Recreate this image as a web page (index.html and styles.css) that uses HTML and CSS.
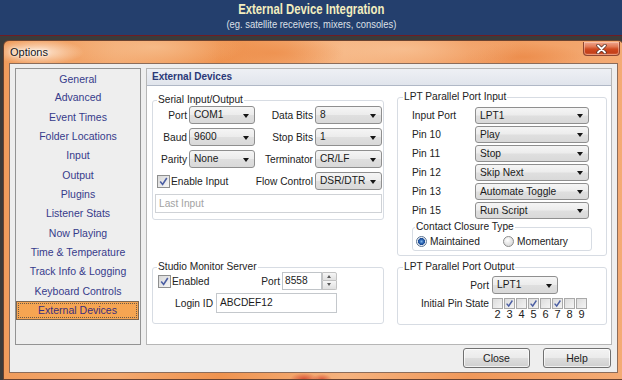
FILE: index.html
```html
<!DOCTYPE html>
<html lang="en">
<head>
<meta charset="utf-8">
<title>External Device Integration</title>
<link rel="stylesheet" href="styles.css">
</head>
<body>
<header class="banner">
  <h1 class="banner-title"><span class="narrow-title">External Device Integration</span></h1>
  <p class="banner-sub"><span class="narrow-sub">(eg. satellite receivers, mixers, consoles)</span></p>
</header>
<div class="desk">
  <div class="window">
    <div class="titlebar">
      <span class="title">Options</span>
      <span class="close-btn">
        <svg width="13" height="10" viewBox="0 0 13 10"><path d="M3 1.5 L10 8.5 M10 1.5 L3 8.5" stroke="#5a3328" stroke-width="3.4" stroke-linecap="round" fill="none"/><path d="M3 1.5 L10 8.5 M10 1.5 L3 8.5" stroke="#ffffff" stroke-width="1.8" stroke-linecap="round" fill="none"/></svg>
      </span>
    </div>
    <div class="client">
      <div class="main">
        <ul class="nav">
          <li>General</li>
          <li>Advanced</li>
          <li>Event Times</li>
          <li>Folder Locations</li>
          <li>Input</li>
          <li>Output</li>
          <li>Plugins</li>
          <li>Listener Stats</li>
          <li>Now Playing</li>
          <li>Time &amp; Temperature</li>
          <li>Track Info &amp; Logging</li>
          <li>Keyboard Controls</li>
          <li class="selected"><span class="focus">External Devices</span></li>
        </ul>
        <section class="panel">
          <div class="panel-head">External Devices</div>
          <div class="panel-body">
            <fieldset class="group serial">
              <legend>Serial Input/Output</legend>
              <div class="serial-grid">
                <span class="lbl r">Port</span><div class="combo">COM1</div>
                <span class="lbl r">Data Bits</span><div class="combo">8</div>
                <span class="lbl r">Baud</span><div class="combo">9600</div>
                <span class="lbl r">Stop Bits</span><div class="combo">1</div>
                <span class="lbl r">Parity</span><div class="combo">None</div>
                <span class="lbl r">Terminator</span><div class="combo">CR/LF</div>
                <label class="check span2"><span class="cb"><svg width="11" height="11" viewBox="0 0 11 11"><path d="M2.2 5.6 L4.6 8.4 L8.8 2" stroke="#4b5ea3" stroke-width="1.6" fill="none"/></svg></span>Enable Input</label>
                <span class="lbl r">Flow Control</span><div class="combo">DSR/DTR</div>
                <div class="field placeholder span4">Last Input</div>
              </div>
            </fieldset>

            <fieldset class="group lpt-in">
              <legend>LPT Parallel Port Input</legend>
              <div class="lpt-body">
                <div class="lpt-grid">
                  <span class="lbl">Input Port</span><div class="combo sm">LPT1</div>
                  <span class="lbl">Pin 10</span><div class="combo sm">Play</div>
                  <span class="lbl">Pin 11</span><div class="combo sm">Stop</div>
                  <span class="lbl">Pin 12</span><div class="combo sm">Skip Next</div>
                  <span class="lbl">Pin 13</span><div class="combo sm">Automate Toggle</div>
                  <span class="lbl">Pin 15</span><div class="combo sm">Run Script</div>
                </div>
                <fieldset class="group contact">
                  <legend>Contact Closure Type</legend>
                  <div class="radios">
                    <label class="radio"><span class="rb on"></span>Maintained</label>
                    <label class="radio"><span class="rb"></span>Momentary</label>
                  </div>
                </fieldset>
              </div>
            </fieldset>

            <fieldset class="group studio">
              <legend>Studio Monitor Server</legend>
              <div class="studio-grid">
                <label class="check"><span class="cb"><svg width="11" height="11" viewBox="0 0 11 11"><path d="M2.2 5.6 L4.6 8.4 L8.8 2" stroke="#4b5ea3" stroke-width="1.6" fill="none"/></svg></span>Enabled</label>
                <span class="lbl r">Port</span>
                <div class="spinner">
                  <div class="field spin-field">8558</div>
                  <div class="spin-btns">
                    <span class="spin-up"></span>
                    <span class="spin-down"></span>
                  </div>
                </div>
                <span class="lbl r login">Login ID</span>
                <div class="field span2b">ABCDEF12</div>
              </div>
            </fieldset>

            <fieldset class="group lpt-out">
              <legend>LPT Parallel Port Output</legend>
              <div class="out-grid">
                <span class="lbl r">Port</span><div class="combo out-combo">LPT1</div>
                <span class="lbl r pin-lbl">Initial Pin State</span>
                <div class="pins">
                  <div class="pin"><span class="pb"></span><span class="num">2</span></div>
                  <div class="pin"><span class="pb"><svg width="9" height="9" viewBox="0 0 9 9"><path d="M1.6 4.6 L3.7 7 L7.4 1.5" stroke="#4b5ea3" stroke-width="1.4" fill="none"/></svg></span><span class="num">3</span></div>
                  <div class="pin"><span class="pb"></span><span class="num">4</span></div>
                  <div class="pin"><span class="pb"><svg width="9" height="9" viewBox="0 0 9 9"><path d="M1.6 4.6 L3.7 7 L7.4 1.5" stroke="#4b5ea3" stroke-width="1.4" fill="none"/></svg></span><span class="num">5</span></div>
                  <div class="pin"><span class="pb"></span><span class="num">6</span></div>
                  <div class="pin"><span class="pb"><svg width="9" height="9" viewBox="0 0 9 9"><path d="M1.6 4.6 L3.7 7 L7.4 1.5" stroke="#4b5ea3" stroke-width="1.4" fill="none"/></svg></span><span class="num">7</span></div>
                  <div class="pin"><span class="pb"></span><span class="num">8</span></div>
                  <div class="pin"><span class="pb"></span><span class="num">9</span></div>
                </div>
              </div>
            </fieldset>
          </div>
        </section>
      </div>
      <div class="actions">
        <button class="btn btn-close" type="button">Close</button>
        <button class="btn btn-help" type="button">Help</button>
      </div>
    </div>
  </div>
</div>
</body>
</html>
```

FILE: styles.css
```css
* { box-sizing: border-box; }
html, body { margin: 0; padding: 0; }
body {
  width: 622px;
  height: 380px;
  overflow: hidden;
  background: #3b3b3b;
  font-family: "Liberation Sans", Arial, sans-serif;
  color: #222;
}

/* Banner */
.banner {
  height: 36px;
  background: #243f6d;
  border-bottom: 1px solid #6e1c24;
  padding-top: 1px;
  text-align: center;
}
.banner-title {
  margin: 0;
  font-family: "Liberation Sans", Arial, sans-serif;
  font-weight: bold;
  font-size: 14px;
  line-height: 16px;
  color: #f3eebf;
}
.narrow-title {
  display: inline-block;
  transform: scaleX(0.81);
  white-space: nowrap;
}
.banner-sub {
  margin: 1px 0 0;
  font-family: "Liberation Sans", Arial, sans-serif;
  font-size: 11px;
  line-height: 13px;
  color: #dde0e8;
}
.narrow-sub {
  display: inline-block;
  transform: scaleX(0.855);
  white-space: nowrap;
}

/* Desktop + window */
.desk {
  padding: 4px 0 0 3px;
}
.window {
  width: 621px;
  height: 340px;
  border: 1px solid #6b4330;
  border-radius: 6px 6px 0 0;
  padding: 0 5px 6px;
  display: flex;
  flex-direction: column;
  background:
    radial-gradient(ellipse 46px 13px at 34px 11px, rgba(255,238,222,0.95), rgba(255,238,222,0) 100%),
    radial-gradient(ellipse 90px 22px at 150px 6px, rgba(247,196,150,0.7), rgba(247,196,150,0)),
    radial-gradient(ellipse 70px 16px at 270px 12px, rgba(236,138,70,0.6), rgba(236,138,70,0)),
    radial-gradient(ellipse 120px 24px at 400px 8px, rgba(250,205,165,0.6), rgba(250,205,165,0)),
    radial-gradient(ellipse 60px 14px at 520px 16px, rgba(232,128,60,0.55), rgba(232,128,60,0)),
    radial-gradient(ellipse 14px 6px at 300px 338px, rgba(210,60,40,0.8), rgba(210,60,40,0)),
    radial-gradient(ellipse 10px 5px at 318px 338px, rgba(210,60,40,0.7), rgba(210,60,40,0)),
    linear-gradient(90deg, #f09c5c 0%, #f3a86e 18%, #ef934f 35%, #f5b27e 55%, #f0985a 75%, #f4ab74 100%);
}
.titlebar {
  height: 22px;
  display: flex;
  align-items: center;
}
.title {
  font-size: 11px;
  color: #151515;
  padding-left: 1px;
  text-shadow: 0 0 5px #fff, 0 0 2px #fff;
}
.close-btn {
  margin-left: auto;
  align-self: flex-start;
  margin-top: 1px;
  margin-right: -2px;
  width: 37px;
  height: 14px;
  border: 1px solid #8d4632;
  border-top: none;
  border-radius: 0 0 4px 4px;
  background: linear-gradient(#f0a890 0%, #e27a56 35%, #cf4a20 55%, #c4401a 80%, #d8663e 100%);
  display: flex;
  align-items: center;
  justify-content: center;
  box-shadow: inset 0 0 0 1px rgba(255,220,200,0.45);
}
.close-btn svg { display: block; }

.client {
  flex: 1;
  border: 1px solid #8b6c5a;
  background: #eeeeee;
  padding: 4px 5px 4px 5px;
  display: flex;
  flex-direction: column;
}
.main {
  height: 277px;
  display: flex;
  gap: 5px;
}

/* Left nav list */
.nav {
  list-style: none;
  margin: 0;
  padding: 0;
  width: 126px;
  flex: none;
  height: 277px;
  border: 1px solid #939393;
  background: #eeeeee;
  font-size: 10.5px;
  color: #363b8b;
}
.nav li {
  height: 19.33px;
  line-height: 19.33px;
  text-align: center;
  white-space: nowrap;
}
.nav li:first-child { line-height: 20px; }
.nav li.selected {
  margin-right: 1px;
  background: #f6a552;
  border: 1px solid #7d6650;
  padding: 1px;
  line-height: 15px;
  color: #3b2f7c;
}
.nav .focus {
  display: block;
  height: 15px;
  border: 1px dotted #6b5a48;
  line-height: 13px;
}

/* Panel */
.panel {
  flex: 1;
  border: 1px solid #b6b6b6;
  background: #ffffff;
  display: flex;
  flex-direction: column;
}
.panel-head {
  height: 17px;
  line-height: 16px;
  background: linear-gradient(#eef0f4, #e1e5ec);
  border-bottom: 1px solid #b0b8c6;
  padding-left: 5px;
  font-size: 10px;
  font-weight: bold;
  color: #2a3878;
}
.panel-body {
  flex: 1;
  padding: 6px 4px 0 5px;
  display: grid;
  grid-template-columns: 232px 210px;
  column-gap: 13px;
  row-gap: 6px;
  align-items: start;
  align-content: start;
  font-size: 10.2px;
}

/* Groups */
.group {
  margin: 0;
  padding: 0;
  min-width: 0;
  border: 1px solid #d7dce3;
  border-radius: 3px;
}
.group > legend {
  padding: 0 1px;
  margin-left: 5px;
  line-height: 10px;
  font-size: 10.2px;
  color: #222;
}
.serial { margin-top: 3px; }
.serial > legend, .studio > legend { margin-left: 4px; }

.lbl {
  display: flex;
  align-items: center;
  white-space: nowrap;
  color: #222;
}
.lbl.r { justify-content: flex-end; }

.serial-grid {
  padding: 1px 1px 6px 2px;
  display: grid;
  grid-template-columns: 32px 66px 56px 67px;
  grid-template-rows: repeat(4, 18px) 19px;
  column-gap: 2px;
  row-gap: 4px;
}
.span2 { grid-column: span 2; }
.span4 { grid-column: span 4; }

/* Combo */
.combo {
  position: relative;
  height: 18px;
  border: 1px solid #8f8f8f;
  border-radius: 3px;
  background: linear-gradient(#f5f5f5 0%, #ececec 48%, #dfdfdf 52%, #d9d9d9 100%);
  padding-left: 4px;
  line-height: 16px;
  white-space: nowrap;
  color: #1a1a1a;
}
.combo::after {
  content: "";
  position: absolute;
  right: 5px;
  top: 7px;
  border-left: 3.5px solid transparent;
  border-right: 3.5px solid transparent;
  border-top: 4px solid #151515;
}
.combo.sm { height: 17px; line-height: 15px; }
.combo.sm::after { top: 6px; }

/* Checkbox */
.check {
  display: flex;
  align-items: center;
  white-space: nowrap;
  padding-left: 2px;
}
.cb {
  width: 13px;
  height: 13px;
  flex: none;
  margin-right: 1px;
  border: 1px solid #8e8f8f;
  background: linear-gradient(135deg, #d8d8d8, #f6f6f6);
  display: inline-flex;
  align-items: center;
  justify-content: center;
}
.cb svg { display: block; }

/* Text fields */
.field {
  height: 19px;
  border: 1px solid #c4c8cc;
  background: #fff;
  padding-left: 3px;
  line-height: 17px;
  white-space: nowrap;
  color: #1a1a1a;
}
.field.placeholder { color: #a2a2a2; border-color: #cfd2d6; }

/* LPT input */
.lpt-body { padding: 5px 0 4px 14px; }
.lpt-grid {
  display: grid;
  grid-template-columns: 63px 114px;
  grid-auto-rows: 17px;
  row-gap: 2px;
}
.contact {
  margin-top: 3px;
  width: 180px;
}
.contact > legend { margin-left: 2px; }
.radios {
  padding: 4px 0 3px 3px;
  display: grid;
  grid-template-columns: 87px 87px;
  grid-auto-rows: 11px;
}
.radio {
  display: flex;
  align-items: center;
  white-space: nowrap;
  line-height: 11px;
}
.rb {
  width: 11px;
  height: 11px;
  flex: none;
  margin-right: 3px;
  border-radius: 50%;
  border: 1px solid #8c8c8c;
  background: radial-gradient(circle at 40% 35%, #ffffff 0, #e8e8e8 45%, #cfcfcf 100%);
}
.rb.on {
  border-color: #5d7592;
  background: radial-gradient(circle at 50% 50%, #7fb4ea 0, #2c66b2 2px, #1c4a94 3.2px, #e9eef4 3.8px, #ffffff 100%);
}

/* Studio */
.studio-grid {
  padding: 0 0 10px 5px;
  display: grid;
  grid-template-columns: 56px 64px 55px;
  grid-template-rows: 18px 20px;
  column-gap: 2px;
  row-gap: 3px;
}
.studio-grid .check { padding-left: 0; }
.login { padding-right: 1px; }
.span2b { grid-column: span 2; height: 20px; line-height: 18px; }
.spinner { display: flex; height: 18px; }
.spin-field {
  width: 40px;
  height: 18px;
  line-height: 16px;
  padding-left: 2px;
  border-color: #c0c4c8;
}
.spin-btns {
  width: 15px;
  display: flex;
  flex-direction: column;
}
.spin-up, .spin-down {
  position: relative;
  height: 9px;
  border: 1px solid #c2c2c2;
  background: linear-gradient(#f6f6f6, #e0e0e0);
}
.spin-up { border-radius: 0 2px 0 0; }
.spin-down { border-top: none; border-radius: 0 0 2px 0; }
.spin-up::after, .spin-down::after {
  content: "";
  position: absolute;
  left: 4px;
  top: 2px;
  border-left: 2.5px solid transparent;
  border-right: 2.5px solid transparent;
}
.spin-up::after { border-bottom: 3px solid #5a5a5a; }
.spin-down::after { top: 2px; border-top: 3px solid #5a5a5a; }

/* LPT output */
.out-grid {
  padding: 4px 0 4px 0;
  display: grid;
  grid-template-columns: 91px 112px;
  grid-template-rows: 18px 22px;
  column-gap: 3px;
  row-gap: 4px;
}
.out-combo { width: 66px; }
.pin-lbl {
  align-items: flex-start;
  line-height: 11px;
  height: 11px;
}
.pins { display: flex; }
.pin {
  width: 12px;
  display: flex;
  flex-direction: column;
  align-items: flex-start;
}
.pb {
  width: 11px;
  height: 11px;
  border: 1px solid #a9a9a9;
  background: linear-gradient(135deg, #dcdcdc, #f4f4f4);
  display: flex;
  align-items: center;
  justify-content: center;
}
.pb svg { display: block; }
.num {
  width: 11px;
  text-align: center;
  font-size: 11px;
  line-height: 11px;
  color: #222;
}

/* Buttons */
.actions {
  margin-top: 3px;
  height: 20px;
  display: flex;
  justify-content: flex-end;
  gap: 13px;
  padding-right: 1px;
}
.btn {
  height: 20px;
  padding: 0;
  border: 1px solid #707070;
  border-radius: 3px;
  background: linear-gradient(#f3f3f3 0%, #ebebeb 48%, #dddddd 52%, #cfcfcf 100%);
  box-shadow: inset 0 0 0 1px rgba(255,255,255,0.7);
  font-family: "Liberation Sans", Arial, sans-serif;
  font-size: 10.5px;
  color: #222;
}
.btn-close { width: 67px; }
.btn-help { width: 68px; }
```
